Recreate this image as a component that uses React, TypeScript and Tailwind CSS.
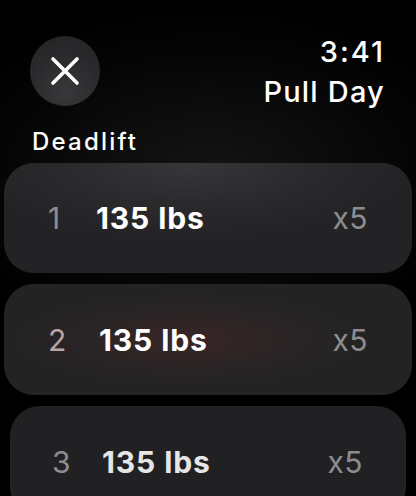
import React from "react";

const font = { fontFamily: "Inter, 'Noto Sans', sans-serif" };

function Row({
  n,
  numW,
  numCls,
  cardCls,
  textCls,
}: {
  n: string;
  numW: string;
  numCls: string;
  cardCls: string;
  textCls: string;
}) {
  return (
    <div className={`flex items-center rounded-[30px] ${cardCls}`}>
      <span className={`${numW} text-[30px] leading-none font-normal ${numCls}`}>{n}</span>
      <span className={`text-[30px] leading-none font-bold tracking-[0.9px] ${textCls}`}>135 lbs</span>
      <span className="ml-auto text-[30px] leading-none font-normal tracking-[0.5px] text-[#8d8d90]">x5</span>
    </div>
  );
}

export default function App() {
  return (
    <div
      className="relative w-[416px] h-[496px] overflow-hidden bg-black bg-[radial-gradient(ellipse_70%_35%_at_50%_35%,#141414_0%,#050505_70%,#000_100%)] text-white"
      style={font}
    >
      <div className="flex justify-between pl-[30px] pr-[31px] pt-[32px]">
        <div className="mt-[4px] w-[70px] h-[70px] rounded-full bg-[radial-gradient(circle_at_50%_80%,#38383a_0%,#29292b_60%,#242426_100%)] flex items-center justify-center">
          <svg width="30" height="30" viewBox="0 0 30 30" fill="none">
            <path d="M3 3 L27 27 M27 3 L3 27" stroke="white" strokeWidth="3.6" strokeLinecap="round" />
          </svg>
        </div>
        <div className="flex flex-col items-end text-[29px] leading-[40px] font-medium">
          <span className="tracking-[2px]">3:41</span>
          <span className="tracking-[1.2px]">Pull Day</span>
        </div>
      </div>
      <div className="pl-[32px] mt-[16px] text-[24px] leading-[28px] font-medium tracking-[2.2px]">Deadlift</div>
      <div className="flex flex-col mt-[7px]">
        <Row
          n="1"
          numW="w-[48px]"
          numCls="text-[#8d8d90]"
          textCls="text-white"
          cardCls="mx-[4px] h-[110px] pl-[44px] pr-[44px] bg-[radial-gradient(ellipse_55%_70%_at_45%_0%,#37373a_0%,#2a2a2c_55%,#232325_100%)]"
        />
        <Row
          n="2"
          numW="w-[51px]"
          numCls="text-[#b9a3a5]"
          textCls="text-white"
          cardCls="mx-[4px] mt-[11px] h-[111px] pl-[44px] pr-[44px] bg-[radial-gradient(ellipse_45%_45%_at_45%_50%,#3a2526_0%,#2a2425_55%,#232324_100%)]"
        />
        <Row
          n="3"
          numW="w-[50px]"
          numCls="text-[#8d8d90]"
          textCls="text-[#e6e6e6]"
          cardCls="mx-[10px] mt-[11px] h-[111px] pl-[42px] pr-[43px] bg-[#212123]"
        />
      </div>
    </div>
  );
}
